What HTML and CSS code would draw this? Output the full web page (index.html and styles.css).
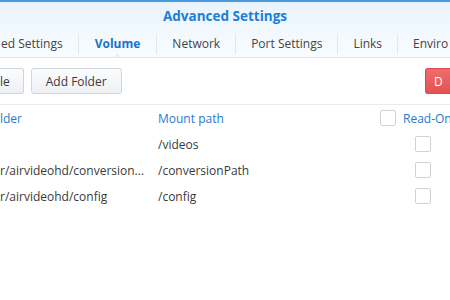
FILE: index.html
```html
<!DOCTYPE html>
<html>
<head>
<meta charset="utf-8">
<link rel="stylesheet" href="styles.css">
</head>
<body>
<div class="window">
  <div class="head">
    <div class="title">Advanced Settings</div>
    <div class="tabs">
      <div class="tab first">ed Settings</div>
      <div class="tab active">Volume</div>
      <div class="tab">Network</div>
      <div class="tab">Port Settings</div>
      <div class="tab">Links</div>
      <div class="tab last">Enviro</div>
    </div>
  </div>
  <div class="toolbar">
    <button class="btn cut">le</button>
    <button class="btn">Add Folder</button>
    <div class="spacer"></div>
    <button class="btn danger">D</button>
  </div>
  <div class="grid">
    <div class="hcell c1">lder</div>
    <div class="hcell c2">Mount path</div>
    <div class="hcell c3"><span class="cb"></span><span>Read-On</span></div>

    <div class="cell c1"></div>
    <div class="cell c2">/videos</div>
    <div class="cell c3 center"><span class="cb"></span></div>

    <div class="cell c1">r/airvideohd/conversion...</div>
    <div class="cell c2">/conversionPath</div>
    <div class="cell c3 center"><span class="cb"></span></div>

    <div class="cell c1">r/airvideohd/config</div>
    <div class="cell c2">/config</div>
    <div class="cell c3 center"><span class="cb"></span></div>
  </div>
</div>
</body>
</html>
```
FILE: styles.css
```css
html, body {
  margin: 0;
  padding: 0;
  background: #ffffff;
}
body {
  width: 450px;
  height: 300px;
  overflow: hidden;
  font-family: "Open Sans", "Liberation Sans", sans-serif;
  font-size: 12px;
  color: #3a3a3a;
}
.window {
  border-top: 2px solid #4a9ae0;
}
.head {
  background: linear-gradient(#e9f3fc, #f9fcff);
  border-bottom: 1px solid #e2e6ea;
  position: relative;
}
.title {
  height: 28px;
  line-height: 28px;
  text-align: center;
  font-weight: bold;
  font-size: 13.5px;
  color: #1a7fd8;
}
.tabs {
  display: flex;
  height: 27px;
  align-items: center;
  overflow: hidden;
}
.tab {
  flex: none;
  padding: 0 15px;
  line-height: 20px;
  color: #444;
  border-right: 1px solid #e3e6ea;
  white-space: nowrap;
}
.tab.first { padding-left: 1px; padding-right: 15px; }
.tab.last { border-right: none; padding-right: 0; }
.tab.active {
  color: #1a72c6;
  font-weight: bold;
  position: relative;
  padding: 0 16px;
}
.tab.active::after {
  content: "";
  position: absolute;
  left: 50%;
  bottom: -11px;
  margin-left: -5px;
  width: 8px;
  height: 8px;
  background: #ffffff;
  border-left: 1px solid #e2e6ea;
  border-top: 1px solid #e2e6ea;
  transform: rotate(45deg);
}
.toolbar {
  display: flex;
  align-items: center;
  height: 46px;
  border-bottom: 1px solid #e8eaec;
  gap: 7px;
}
.btn {
  height: 26px;
  font-family: inherit;
  font-size: 12px;
  color: #3a3a3a;
  background: linear-gradient(#fbfcfd, #eef1f4);
  border: 1px solid #cfd5db;
  border-radius: 3px;
  padding: 0 14px;
}
.btn.cut {
  border-left: none;
  border-radius: 0 3px 3px 0;
  padding: 0 13px 0 0;
  margin-left: 0;
}
.spacer { flex: 1; }
.btn.danger {
  background: linear-gradient(#ef6b6b, #e45252);
  border: 1px solid #d94848;
  color: #fff;
  border-right: none;
  border-radius: 3px 0 0 3px;
  padding: 0 0 0 8px;
  width: 25px;
  text-align: left;
}
.grid {
  display: grid;
  grid-template-columns: 158px 222px 70px;
  grid-auto-rows: 26px;
}
.hcell, .cell {
  display: flex;
  align-items: center;
  white-space: nowrap;
  overflow: hidden;
}
.hcell { color: #1f7bd0; height: 26px; }
.c3 { gap: 7px; }
.center { justify-content: flex-start; padding-left: 35px; }
.cb {
  display: inline-block;
  width: 14px;
  height: 14px;
  border: 1px solid #cfd3d7;
  border-radius: 2px;
  background: #fff;
  flex: none;
}
```
